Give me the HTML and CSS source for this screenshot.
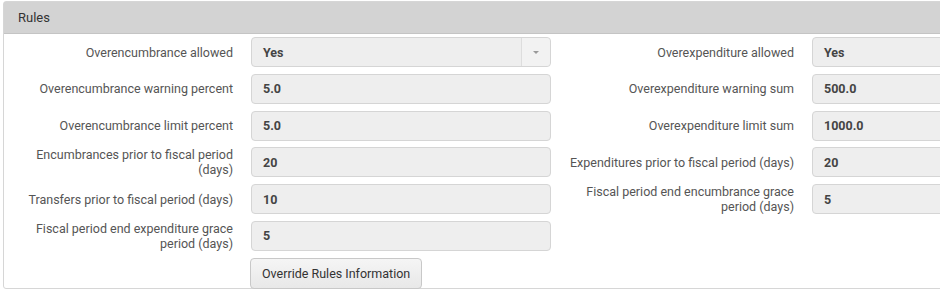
FILE: index.html
```html
<!DOCTYPE html>
<html>
<head>
<meta charset="utf-8">
<link rel="stylesheet" href="styles.css">
</head>
<body>
<div class="panel">
  <div class="panel-heading">Rules</div>
  <div class="panel-body">
    <div class="col">
      <div class="row"><label class="lbl">Overencumbrance allowed</label>
        <div class="field select"><span class="val">Yes</span><span class="caret-box"><span class="caret"></span></span></div></div>
      <div class="row"><label class="lbl">Overencumbrance warning percent</label><div class="field"><span class="val">5.0</span></div></div>
      <div class="row"><label class="lbl">Overencumbrance limit percent</label><div class="field"><span class="val">5.0</span></div></div>
      <div class="row"><label class="lbl">Encumbrances prior to fiscal period (days)</label><div class="field"><span class="val">20</span></div></div>
      <div class="row"><label class="lbl">Transfers prior to fiscal period (days)</label><div class="field"><span class="val">10</span></div></div>
      <div class="row"><label class="lbl">Fiscal period end expenditure grace period (days)</label><div class="field"><span class="val">5</span></div></div>
      <div class="row"><span class="lbl"></span><button class="btn">Override Rules Information</button></div>
    </div>
    <div class="col">
      <div class="row"><label class="lbl">Overexpenditure allowed</label>
        <div class="field select"><span class="val">Yes</span><span class="caret-box"><span class="caret"></span></span></div></div>
      <div class="row"><label class="lbl">Overexpenditure warning sum</label><div class="field"><span class="val">500.0</span></div></div>
      <div class="row"><label class="lbl">Overexpenditure limit sum</label><div class="field"><span class="val">1000.0</span></div></div>
      <div class="row"><label class="lbl">Expenditures prior to fiscal period (days)</label><div class="field"><span class="val">20</span></div></div>
      <div class="row"><label class="lbl">Fiscal period end encumbrance grace period (days)</label><div class="field"><span class="val">5</span></div></div>
    </div>
  </div>
</div>
</body>
</html>
```
FILE: styles.css
```css
html, body { margin: 0; padding: 0; overflow: hidden; background: #fff; }
body { font-family: Roboto, "Liberation Sans", Arial, sans-serif; font-size: 12.5px; color: #555; }
.panel {
  margin: 1px 0 0 3px;
  width: 1124px;
  border: 1px solid #d6d6d6;
  border-radius: 3px;
  box-sizing: border-box;
}
.panel-heading {
  height: 31px;
  line-height: 31px;
  background: #d3d3d3;
  border-bottom: 1px solid #c4c4c4;
  padding-left: 14px;
  color: #333;
  font-size: 13px;
}
.panel-body { display: flex; padding-top: 3px; }
.col { width: 561px; display: flex; flex-direction: column; gap: 6.8px; }
.row { display: flex; align-items: center; height: 30px; }
.lbl {
  width: 229px;
  flex: none;
  text-align: right;
  line-height: 15px;
  margin-right: 18px;
  color: #555;
}
.field {
  width: 300px;
  height: 30px;
  box-sizing: border-box;
  background: #eee;
  border: 1px solid #d5d5d5;
  border-radius: 4px;
  display: flex;
  align-items: center;
  padding-left: 11px;
  font-weight: bold;
  color: #444;
}
.select { position: relative; }
.val { flex: 1; }
.caret-box {
  width: 28px;
  height: 100%;
  border-left: 1px solid #ddd;
  background: #f2f2f2;
  border-radius: 0 4px 4px 0;
  display: flex;
  align-items: center;
  justify-content: center;
}
.caret {
  width: 0; height: 0;
  border-left: 3px solid transparent;
  border-right: 3px solid transparent;
  border-top: 3px solid #999;
}
.btn {
  font-family: inherit;
  font-size: 12.5px;
  color: #333;
  height: 31px;
  padding: 0 11px;
  margin-left: -1px;
  margin-top: 1px;
  background: linear-gradient(#f5f5f5, #e8e8e8);
  border: 1px solid #c8c8c8;
  border-radius: 4px;
}
```
